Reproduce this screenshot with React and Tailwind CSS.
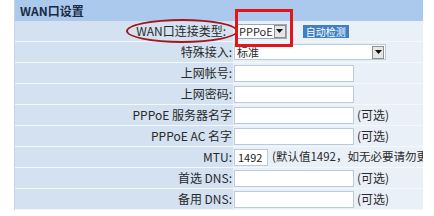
import React from 'react';

const font = { fontFamily: '"Noto Sans CJK SC", "Liberation Sans", sans-serif' };

const Input = ({ w = 'w-[120px]', value = '' }) => (
    <div className={`${w} shrink-0 h-[17px] bg-white border border-[#b9cbdc] text-[11px] leading-[15px] px-[3px] text-[#222]`}>{value}</div>
);

const Row = ({ label, children, circled }) => (
    <div className="flex h-[21px] border-b border-[#f4f7fb]">
        <div className="w-[218px] shrink-0 bg-[#d3e1f0] flex items-center justify-end pr-[1px] text-[12px] text-[#2a2a2a]">
            {circled ? (
                <span className="relative px-[6px]">
                    {label}
                    <span className="absolute left-[-4px] right-[-6px] top-[-3px] bottom-[-3px] border-2 border-[#a3161c] rounded-[50%]" />
                </span>
            ) : label}
        </div>
        <div className="flex-1 bg-[#e9f0f8] flex items-center gap-[2px] pl-[1px] text-[12px] text-[#2a2a2a] whitespace-nowrap">
            {children}
        </div>
    </div>
);

const Arrow = () => (
    <div className="w-[12px] h-[13px] bg-[#e6e6e6] border border-[#8f8f8f] flex items-center justify-center">
        <svg width="7" height="4" viewBox="0 0 7 4"><path d="M0 0h7L3.5 4z" fill="#111" /></svg>
    </div>
);

export default function App() {
    return (
        <div className="w-[434px] h-[216px] bg-white pl-[14px] overflow-hidden" style={font}>
            <div className="w-[409px] border-l border-[#c6d5e5] overflow-hidden">
                <div className="h-[21px] bg-[#abc9ec] flex items-center pl-[5px] text-[12px] font-bold text-[#1c2b45]">WAN口设置</div>
                <Row label="WAN口连接类型:" circled>
                    <div className="relative ml-[3px] flex items-center gap-[1px] h-[15px] bg-white border border-[#9aa8b8] pl-[1px] text-[11px] leading-none">
                        PPPoE
                        <Arrow />
                        <span className="absolute left-[-3px] right-[-7px] top-[-16px] bottom-[-9px] border-[3px] border-[#e3151b]" />
                    </div>
                    <div className="ml-[14px] h-[13px] px-[3px] bg-[#3f7fc4] text-white text-[10px] leading-[13px]">自动检测</div>
                </Row>
                <Row label="特殊接入:">
                    <div className="w-[152px] h-[16px] bg-white border border-[#b9cbdc] flex items-center justify-between pl-[2px] pr-[1px] text-[11px] leading-none">
                        标准
                        <Arrow />
                    </div>
                </Row>
                <Row label="上网帐号:"><Input /></Row>
                <Row label="上网密码:"><Input /></Row>
                <Row label="PPPoE 服务器名字"><Input /><span className="ml-[1px]">(可选)</span></Row>
                <Row label="PPPoE AC 名字"><Input /><span className="ml-[1px]">(可选)</span></Row>
                <Row label="MTU:"><Input w="w-[34px]" value="1492" /><span className="ml-[2px] text-[11.5px]">(默认值1492，如无必要请勿更改)</span></Row>
                <Row label="首选 DNS:"><Input /><span className="ml-[1px]">(可选)</span></Row>
                <Row label="备用 DNS:"><Input /><span className="ml-[1px]">(可选)</span></Row>
            </div>
        </div>
    );
}
